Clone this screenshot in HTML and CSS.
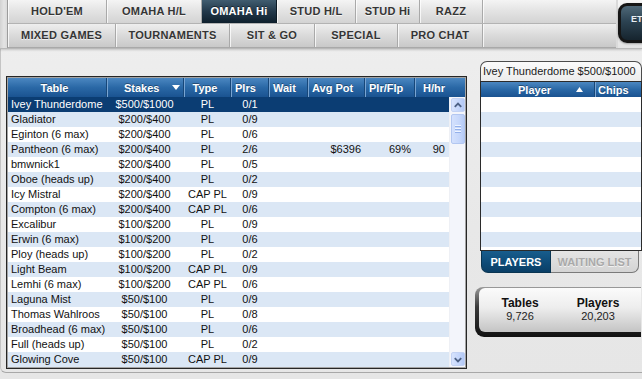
FILE: index.html
```html
<!DOCTYPE html>
<html>
<head>
<meta charset="utf-8">
<link rel="stylesheet" href="styles.css">
</head>
<body>
<div class="top">
  <div class="tabbar">
    <div class="tabrow r1">
      <div class="tab w99">HOLD'EM</div>
      <div class="tab w95">OMAHA H/L</div>
      <div class="tab w75 sel">OMAHA Hi</div>
      <div class="tab w79">STUD H/L</div>
      <div class="tab w64">STUD Hi</div>
      <div class="tab w63">RAZZ</div>
      <div class="tab fill"></div>
    </div>
    <div class="tabrow r2">
      <div class="tab w108">MIXED GAMES</div>
      <div class="tab w114">TOURNAMENTS</div>
      <div class="tab w85">SIT &amp; GO</div>
      <div class="tab w83">SPECIAL</div>
      <div class="tab w85">PRO CHAT</div>
      <div class="tab fill"></div>
    </div>
  </div>
  <div class="et"><div class="et-in">ET</div></div>
</div>

<div class="main">
  <div class="lobby">
    <div class="thead">
      <div class="th c-table">Table</div>
      <div class="th c-stakes"><span>Stakes</span><svg class="sort" width="8" height="5" viewBox="0 0 8 5"><polygon points="0,0 8,0 4,5" fill="#fff"/></svg></div>
      <div class="th c-type">Type</div>
      <div class="th c-left">Plrs</div>
      <div class="th c-left">Wait</div>
      <div class="th c-left">Avg Pot</div>
      <div class="th c-left">Plr/Flp</div>
      <div class="th c-hhr">H/hr</div>
    </div>
    <div class="tbody">
      <div class="rows">
        <div class="row sel"><span class="t">Ivey Thunderdome</span><span class="c">$500/$1000</span><span class="c">PL</span><span class="c">0/1</span><span></span><span class="r"></span><span class="r"></span><span class="r"></span></div>
        <div class="row"><span class="t">Gladiator</span><span class="c">$200/$400</span><span class="c">PL</span><span class="c">0/9</span><span></span><span class="r"></span><span class="r"></span><span class="r"></span></div>
        <div class="row"><span class="t">Eginton (6 max)</span><span class="c">$200/$400</span><span class="c">PL</span><span class="c">0/6</span><span></span><span class="r"></span><span class="r"></span><span class="r"></span></div>
        <div class="row"><span class="t">Pantheon (6 max)</span><span class="c">$200/$400</span><span class="c">PL</span><span class="c">2/6</span><span></span><span class="r">$6396</span><span class="r">69%</span><span class="r">90</span></div>
        <div class="row"><span class="t">bmwnick1</span><span class="c">$200/$400</span><span class="c">PL</span><span class="c">0/5</span><span></span><span class="r"></span><span class="r"></span><span class="r"></span></div>
        <div class="row"><span class="t">Oboe (heads up)</span><span class="c">$200/$400</span><span class="c">PL</span><span class="c">0/2</span><span></span><span class="r"></span><span class="r"></span><span class="r"></span></div>
        <div class="row"><span class="t">Icy Mistral</span><span class="c">$200/$400</span><span class="c">CAP PL</span><span class="c">0/9</span><span></span><span class="r"></span><span class="r"></span><span class="r"></span></div>
        <div class="row"><span class="t">Compton (6 max)</span><span class="c">$200/$400</span><span class="c">CAP PL</span><span class="c">0/6</span><span></span><span class="r"></span><span class="r"></span><span class="r"></span></div>
        <div class="row"><span class="t">Excalibur</span><span class="c">$100/$200</span><span class="c">PL</span><span class="c">0/9</span><span></span><span class="r"></span><span class="r"></span><span class="r"></span></div>
        <div class="row"><span class="t">Erwin (6 max)</span><span class="c">$100/$200</span><span class="c">PL</span><span class="c">0/6</span><span></span><span class="r"></span><span class="r"></span><span class="r"></span></div>
        <div class="row"><span class="t">Ploy (heads up)</span><span class="c">$100/$200</span><span class="c">PL</span><span class="c">0/2</span><span></span><span class="r"></span><span class="r"></span><span class="r"></span></div>
        <div class="row"><span class="t">Light Beam</span><span class="c">$100/$200</span><span class="c">CAP PL</span><span class="c">0/9</span><span></span><span class="r"></span><span class="r"></span><span class="r"></span></div>
        <div class="row"><span class="t">Lemhi (6 max)</span><span class="c">$100/$200</span><span class="c">CAP PL</span><span class="c">0/6</span><span></span><span class="r"></span><span class="r"></span><span class="r"></span></div>
        <div class="row"><span class="t">Laguna Mist</span><span class="c">$50/$100</span><span class="c">PL</span><span class="c">0/9</span><span></span><span class="r"></span><span class="r"></span><span class="r"></span></div>
        <div class="row"><span class="t">Thomas Wahlroos</span><span class="c">$50/$100</span><span class="c">PL</span><span class="c">0/8</span><span></span><span class="r"></span><span class="r"></span><span class="r"></span></div>
        <div class="row"><span class="t">Broadhead (6 max)</span><span class="c">$50/$100</span><span class="c">PL</span><span class="c">0/6</span><span></span><span class="r"></span><span class="r"></span><span class="r"></span></div>
        <div class="row"><span class="t">Full (heads up)</span><span class="c">$50/$100</span><span class="c">PL</span><span class="c">0/2</span><span></span><span class="r"></span><span class="r"></span><span class="r"></span></div>
        <div class="row"><span class="t">Glowing Cove</span><span class="c">$50/$100</span><span class="c">CAP PL</span><span class="c">0/9</span><span></span><span class="r"></span><span class="r"></span><span class="r"></span></div>
      </div>
      <div class="vscroll">
        <div class="sbtn"><svg width="13" height="13" viewBox="0 0 13 13"><polyline points="3,8 6.5,4.5 10,8" fill="none" stroke="#4d6185" stroke-width="2"/></svg></div>
        <div class="thumb"><i></i><i></i><i></i><i></i></div>
        <div class="track"></div>
        <div class="sbtn"><svg width="13" height="13" viewBox="0 0 13 13"><polyline points="3,5 6.5,8.5 10,5" fill="none" stroke="#4d6185" stroke-width="2"/></svg></div>
      </div>
    </div>
  </div>

  <div class="side">
    <div class="caption">Ivey Thunderdome $500/$1000</div>
    <div class="plist">
      <div class="phead">
        <div class="ph-player"><span>Player</span><svg class="sort" width="7" height="5" viewBox="0 0 7 5"><polygon points="0,5 7,5 3.5,0" fill="#fff"/></svg></div>
        <div class="ph-chips">Chips</div>
      </div>
      <div class="prows">
        <div class="prow"></div><div class="prow"></div><div class="prow"></div><div class="prow"></div><div class="prow"></div>
        <div class="prow"></div><div class="prow"></div><div class="prow"></div><div class="prow"></div><div class="prow"></div>
        <div class="prow"></div>
      </div>
    </div>
    <div class="ptabs">
      <div class="ptab on">PLAYERS</div>
      <div class="ptab off">WAITING LIST</div>
    </div>
    <div class="stats">
      <div class="stats-in">
        <div class="stat"><b>Tables</b><span>9,726</span></div>
        <div class="stat"><b>Players</b><span>20,203</span></div>
      </div>
    </div>
  </div>
</div>
</body>
</html>
```

FILE: styles.css
```css
html, body {
  margin: 0;
  padding: 0;
  width: 642px;
  height: 379px;
  overflow: hidden;
}
body {
  background: linear-gradient(#efefef, #e8e8e8 60%, #e6e6e6);
  font-family: "Liberation Sans", Arial, sans-serif;
  font-size: 11px;
  color: #000;
}

/* ---------- top tab bar ---------- */
.top {
  display: flex;
  height: 48px;
  padding-left: 7px;
  background: linear-gradient(90deg, #d2d2d2, #e4e4e4 4px, #dadada 7px);
  box-shadow: 0 1px 0 #b9b9b9, 0 2px 2px rgba(0,0,0,0.18);
  position: relative;
}
.tabbar {
  flex: none;
  width: 608px;
  border-left: 1px solid #9c9c9c;
  display: flex;
  flex-direction: column;
}
.tabrow {
  display: flex;
  height: 24px;
}
.tabrow.r1 {
  border-bottom: 1px solid #b3b3b3;
  height: 23px;
}
.tabrow.r2 {
  height: 24px;
  border-bottom: 1px solid #a9a9a9;
}
.tab {
  box-sizing: border-box;
  height: 100%;
  display: flex;
  align-items: center;
  justify-content: center;
  font-weight: bold;
  font-size: 11px;
  letter-spacing: 0.25px;
  color: #353535;
  text-shadow: 0 1px 0 rgba(255,255,255,0.7);
  border-right: 1px solid #a9a9a9;
  box-shadow: inset 1px 0 0 rgba(255,255,255,0.75);
  white-space: nowrap;
}
.r1 .tab { background: linear-gradient(#f4f4f4, #e4e4e4 45%, #d3d3d3); }
.r2 .tab { background: linear-gradient(#eeeeee, #dcdcdc 45%, #c9c9c9); }
.tab.fill { flex: 1; border-right: none; }
.tab.sel {
  background: linear-gradient(#415d70, #22384a 50%, #0e1f2c);
  color: #fff;
  text-shadow: 0 -1px 0 rgba(0,0,0,0.5);
  box-shadow: none;
  border-right-color: #0c1a24;
}
.w99 { width: 99px; }
.w95 { width: 95px; }
.w75 { width: 75px; }
.w79 { width: 79px; }
.w64 { width: 64px; }
.w63 { width: 63px; }
.w108 { width: 108px; }
.w114 { width: 114px; }
.w85 { width: 85px; }
.w83 { width: 83px; }

.et {
  flex: none;
  margin-left: 2px;
  width: 40px;
  background: linear-gradient(#f6f6f6, #e4e4e4);
  padding-top: 3px;
  box-sizing: border-box;
}
.et-in {
  width: 24px;
  height: 26px;
  border: 3px solid #161616;
  border-radius: 9px;
  background: linear-gradient(#4f6878, #2c4352 45%, #16242e);
  color: #e8eef2;
  font-weight: bold;
  font-size: 9px;
  padding: 8px 0 0 10px;
  box-sizing: content-box;
  box-shadow: 0 1px 2px rgba(0,0,0,0.3);
}

/* ---------- main ---------- */
.main {
  display: flex;
  align-items: flex-start;
  padding-left: 6px;
  height: 324px;
  border-bottom: 1px solid #a8a8a8;
  border-left: 1px solid #c4c4c4;
  border-bottom-left-radius: 6px;
}

.lobby {
  margin-top: 28px;
  margin-left: -1px;
  width: 457px;
  border: 1px solid #262626;
  padding: 1px;
  background: #a4a4a4;
  flex: none;
}
.thead {
  display: grid;
  grid-template-columns: 99px 77px 47px 38px 39px 57px 50px 50px;
  height: 19px;
  background: linear-gradient(#4b87c1, #2a68a6 50%, #1a5391);
}
.th {
  box-sizing: border-box;
  display: flex;
  align-items: center;
  color: #fff;
  font-weight: bold;
  font-size: 11px;
  text-shadow: 0 -1px 0 rgba(0,0,0,0.35);
  box-shadow: inset -1px 0 0 #174779;
  white-space: nowrap;
}
.th + .th { border-left: 1px solid #78a4d2; }
.c-table { justify-content: center; padding-right: 6px; }
.c-stakes { padding-left: 16px; }
.c-stakes .sort { margin-left: auto; margin-right: 4px; }
.c-type { justify-content: center; padding-right: 6px; }
.c-left { padding-left: 3px; }
.c-hhr { padding-left: 7px; box-shadow: none; }

.tbody {
  display: flex;
  height: 270px;
}
.rows {
  width: 441px;
  background: #fff;
}
.row {
  display: grid;
  grid-template-columns: 99px 77px 47px 38px 39px 57px 50px 34px;
  height: 15px;
  line-height: 15px;
  white-space: nowrap;
  background: #fff;
  color: #111;
}
.row:nth-child(even) { background: #dbe7f5; }
.row.sel { background: #0b3d73; color: #fff; }
.row .t { padding-left: 3px; }
.row .c { text-align: center; }
.row .c:nth-child(2) { padding-right: 2px; }
.row .r { text-align: right; padding-right: 4px; }

.vscroll {
  width: 16px;
  background: #f3f5fb;
  border-left: 1px solid #eef0f5;
  box-sizing: border-box;
  display: flex;
  flex-direction: column;
  align-items: center;
}
.sbtn {
  box-sizing: border-box;
  width: 14px;
  height: 14px;
  margin: 1px 0;
  border: 1px solid #c3d2f3;
  border-radius: 2px;
  background: linear-gradient(90deg, #d7e3fd, #c3d5fb 60%, #b3c8f5);
  display: flex;
  align-items: center;
  justify-content: center;
}
.sbtn svg { display: block; }
.thumb {
  box-sizing: border-box;
  width: 14px;
  height: 30px;
  margin-top: 1px;
  border: 1px solid #b3c7f1;
  border-radius: 2px;
  background: linear-gradient(90deg, #d4e1fd, #c6d7fb 60%, #b6cbf6);
  display: flex;
  flex-direction: column;
  align-items: center;
  justify-content: center;
  gap: 1px;
}
.thumb i {
  display: block;
  width: 6px;
  height: 1px;
  background: #eef4ff;
  border-bottom: 1px solid #94b0ea;
}
.thumb i:first-child { display: none; }
.track { flex: 1; }

/* ---------- side panel ---------- */
.side {
  margin-left: 8px;
  margin-top: 13px;
  width: 166px;
  flex: none;
}
.caption {
  margin-left: 5px;
  box-sizing: border-box;
  width: 162px;
  height: 20px;
  line-height: 19px;
  padding-left: 2px;
  border: 1px solid #4c4c4c;
  border-bottom: none;
  border-radius: 7px 7px 0 0;
  background: linear-gradient(#fbfbfb, #ececec);
  color: #1a1a1a;
  font-size: 11px;
  white-space: nowrap;
}
.plist {
  margin-left: 5px;
  width: 160px;
  border: 1px solid #2b2b2b;
  height: 168px;
  overflow: hidden;
  background: #fff;
}
.phead {
  display: flex;
  height: 15px;
  background: linear-gradient(#4b87c1, #2a68a6 50%, #1a5391);
  color: #fff;
  font-weight: bold;
  font-size: 11px;
  text-shadow: 0 -1px 0 rgba(0,0,0,0.35);
}
.ph-player {
  box-sizing: border-box;
  width: 114px;
  display: flex;
  align-items: center;
  padding-left: 37px;
  box-shadow: inset -1px 0 0 #174779;
}
.ph-player .sort { margin-left: auto; margin-right: 12px; }
.ph-chips {
  flex: 1;
  display: flex;
  align-items: center;
  padding-left: 2px;
  border-left: 1px solid #78a4d2;
}
.prow {
  height: 15px;
  background: #fff;
}
.prow:nth-child(even) { background: #dbe7f5; }

.ptabs {
  display: flex;
  margin-left: 6px;
  height: 22px;
}
.ptab {
  box-sizing: border-box;
  height: 22px;
  display: flex;
  align-items: center;
  justify-content: center;
  font-weight: bold;
  font-size: 11px;
}
.ptab.on {
  width: 70px;
  background: linear-gradient(#185d8d, #0d4a76 60%, #0a3f66);
  color: #fff;
  border-radius: 0 0 0 7px;
  border: 1px solid #0a3552;
  border-top: none;
}
.ptab.off {
  width: 88px;
  background: linear-gradient(#e4e4e4, #d4d4d4);
  color: #a9a9a9;
  border: 1px solid #7a7a7a;
  border-top: none;
  border-left: none;
  border-radius: 0 0 7px 0;
  text-shadow: 0 1px 0 #f2f2f2;
}

.stats {
  margin-top: 14px;
  height: 50px;
  box-sizing: border-box;
  padding: 1px 0 5px 4px;
  border-radius: 8px 0 0 9px;
  background: linear-gradient(#9a9a9a, #3a3a3a 40%, #111 100%);
}
.stats-in {
  height: 44px;
  border-radius: 6px 0 0 6px;
  background: linear-gradient(#fbfbfb, #ededed 45%, #c4c4c4);
  display: grid;
  grid-template-columns: 78px 78px;
  padding-left: 2px;
  box-sizing: border-box;
  padding-top: 9px;
}
.stat {
  display: flex;
  flex-direction: column;
  align-items: center;
  line-height: 13px;
}
.stat b {
  font-size: 12px;
  color: #111;
}
.stat span {
  font-size: 11px;
  color: #222;
}
```
